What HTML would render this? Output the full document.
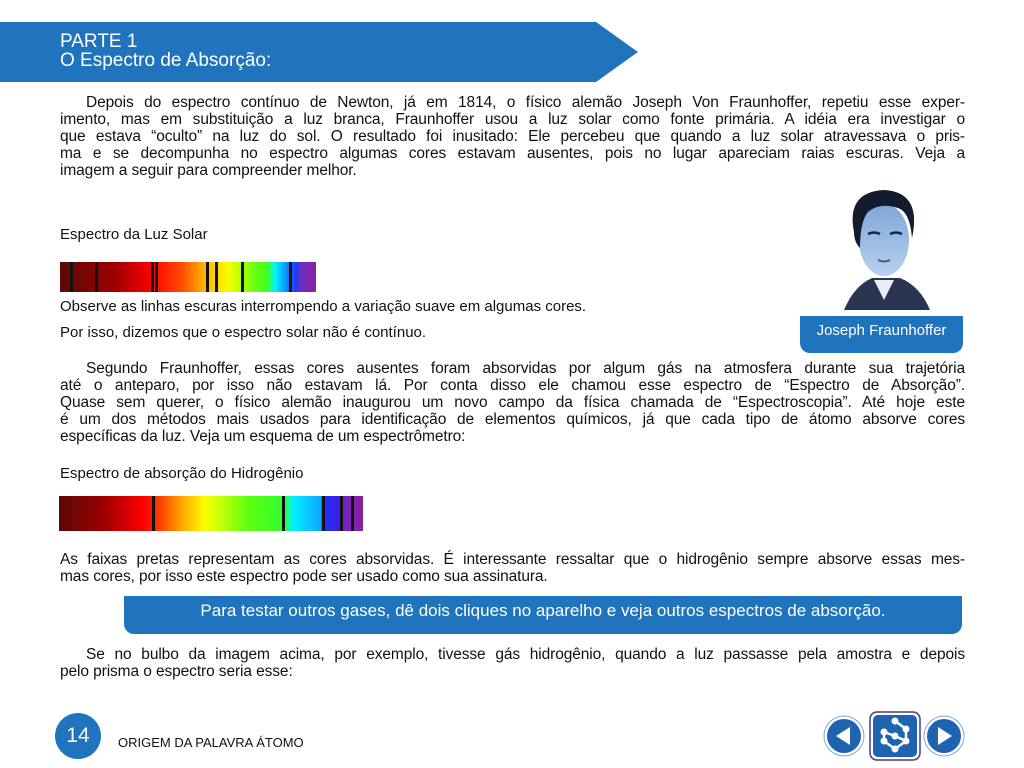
<!DOCTYPE html>
<html><head><meta charset="utf-8"><style>
body{margin:0;width:1024px;height:768px;background:#fff;font-family:"Liberation Sans","DejaVu Sans",sans-serif;color:#111;position:relative;overflow:hidden}
.a{position:absolute}
.l{position:absolute;left:60px;width:905px;font-size:15.5px;line-height:17px;text-align:justify;text-align-last:justify;white-space:nowrap;letter-spacing:-0.1px;box-sizing:border-box}
.i{padding-left:26px}
.n{text-align-last:left}
.t{position:absolute;left:60px;font-size:15px}
.k{position:absolute;top:0;bottom:0;width:3px;background:#111}
</style></head><body>
<svg class="a" style="left:0;top:22px" width="640" height="60"><polygon points="0,0 596,0 638,30 596,60 0,60" fill="#1f74bd"/></svg>
<div class="a" style="left:60px;top:32px;color:#fff;font-size:19px;line-height:19px">PARTE 1<br>O Espectro de Absorção:</div>

<div class="l i" style="top:94px">Depois do espectro contínuo de Newton, já em 1814, o físico alemão Joseph Von Fraunhoffer, repetiu esse exper-</div>
<div class="l" style="top:111px">imento, mas em substituição a luz branca, Fraunhoffer usou a luz solar como fonte primária. A idéia era investigar o</div>
<div class="l" style="top:128px">que estava “oculto” na luz do sol. O resultado foi inusitado: Ele percebeu que quando a luz solar atravessava o pris-</div>
<div class="l" style="top:145px">ma e se decompunha no espectro algumas cores estavam ausentes, pois no lugar apareciam raias escuras. Veja a</div>
<div class="l n" style="top:162px">imagem a seguir para compreender melhor.</div>

<div class="t" style="top:226px">Espectro da Luz Solar</div>
<div class="a" style="left:60px;top:262px;width:256px;height:30px;background:linear-gradient(90deg,#5a0a05 0%,#a00000 22%,#ff0000 36%,#ff5000 48%,#ffb000 56%,#f5ff00 66%,#6cff10 76%,#40ff20 81%,#00f5ff 84%,#1a3cff 92%,#6a30c0 94%,#8a20a0 100%)">
<div class="k" style="left:10px"></div><div class="k" style="left:35px"></div><div class="k" style="left:91px"></div><div class="k" style="left:95px"></div><div class="k" style="left:146px"></div><div class="k" style="left:155px"></div><div class="k" style="left:181px"></div><div class="k" style="left:229px"></div></div>
<div class="t" style="top:298px">Observe as linhas escuras interrompendo a variação suave em algumas cores.</div>
<div class="t" style="top:324px">Por isso, dizemos que o espectro solar não é contínuo.</div>

<svg class="a" style="left:830px;top:188px" width="110" height="122" viewBox="0 0 110 122">
<defs><linearGradient id="f" x1="0" y1="0" x2="0" y2="1"><stop offset="0" stop-color="#7fa6d8"/><stop offset="1" stop-color="#b8d0ee"/></linearGradient></defs>
<path d="M14,122 Q24,98 42,90 L70,90 Q90,98 100,122Z" fill="#2a3550"/>
<path d="M44,92 L54,112 L64,92Z" fill="#e8eef8"/>
<ellipse cx="54" cy="52" rx="25" ry="36" fill="url(#f)"/>
<path d="M24,44 Q16,4 54,2 Q92,4 82,50 Q80,24 68,20 Q50,14 38,24 Q30,34 30,60 Q24,54 24,44Z" fill="#121c2c"/>
<path d="M38,46 q6,-3 12,0 M60,46 q6,-3 12,0" stroke="#1a2740" stroke-width="2.5" fill="none"/>
<path d="M48,72 q6,3 12,0" stroke="#4a5a7a" stroke-width="2" fill="none"/>
</svg>
<div class="a" style="left:800px;top:316px;width:163px;height:37px;background:#1f74bd;border-radius:0 0 10px 10px;color:#fff;font-size:15px;line-height:29px;text-align:center">Joseph Fraunhoffer</div>

<div class="l i" style="top:360px">Segundo Fraunhoffer, essas cores ausentes foram absorvidas por algum gás na atmosfera durante sua trajetória</div>
<div class="l" style="top:377px">até o anteparo, por isso não estavam lá. Por conta disso ele chamou esse espectro de “Espectro de Absorção”.</div>
<div class="l" style="top:394px">Quase sem querer, o físico alemão inaugurou um novo campo da física chamada de “Espectroscopia”. Até hoje este</div>
<div class="l" style="top:411px">é um dos métodos mais usados para identificação de elementos químicos, já que cada tipo de átomo absorve cores</div>
<div class="l n" style="top:428px">específicas da luz. Veja um esquema de um espectrômetro:</div>
<div class="t" style="top:465px">Espectro de absorção do Hidrogênio</div>
<div class="a" style="left:59px;top:496px;width:304px;height:35px;background:linear-gradient(90deg,#5a0a05 0%,#a00000 15%,#ff0000 28%,#ff2000 31%,#ffa000 40%,#ffff00 48%,#60ff10 62%,#30ff30 74%,#00f0ff 77%,#10a8ff 86%,#2030ff 87%,#3a20e0 92%,#7a20c0 94%,#8a20a0 100%)">
<div class="k" style="left:93px"></div><div class="k" style="left:223px"></div><div class="k" style="left:263px"></div><div class="k" style="left:281px"></div><div class="k" style="left:292px"></div></div>

<div class="l" style="top:551px">As faixas pretas representam as cores absorvidas. É interessante ressaltar que o hidrogênio sempre absorve essas mes-</div>
<div class="l n" style="top:568px">mas cores, por isso este espectro pode ser usado como sua assinatura.</div>
<div class="a" style="left:124px;top:596px;width:838px;height:38px;background:#1f74bd;border-radius:0 0 10px 10px;color:#fff;font-size:17px;line-height:30px;text-align:center">Para testar outros gases, dê dois cliques no aparelho e veja outros espectros de absorção.</div>
<div class="l i" style="top:646px">Se no bulbo da imagem acima, por exemplo, tivesse gás hidrogênio, quando a luz passasse pela amostra e depois</div>
<div class="l n" style="top:663px">pelo prisma o espectro seria esse:</div>

<div class="a" style="left:55px;top:713px;width:46px;height:46px;border-radius:50%;background:#1f74bd;color:#fff;font-size:21px;line-height:46px;text-align:center">14</div>
<div class="a" style="left:90px;top:748px;width:0;height:0;border-left:6px solid #1f74bd;border-bottom:8px solid transparent"></div>
<div class="a" style="left:118px;top:735px;font-size:13px">ORIGEM DA PALAVRA ÁTOMO</div>

<svg class="a" style="left:820px;top:708px" width="150" height="56">
<circle cx="24" cy="28" r="20" fill="#fff" stroke="#7fa8d8"/><circle cx="24" cy="28" r="17" fill="#1f64b0"/><polygon points="16,28 30,19 30,37" fill="#fff"/>
<rect x="50" y="4" width="50" height="48" rx="7" fill="#fff" stroke="#4a3a8a" stroke-width="1.5"/><rect x="53" y="7" width="44" height="42" rx="5" fill="#1f64b0"/>
<g stroke="#fff" stroke-width="2.5" fill="none"><path d="M75,13 L86,21 L86,33 L75,41 L64,33 M64,33 L64,24 L75,28 L86,33"/></g>
<g fill="#fff"><circle cx="75" cy="13" r="3.5"/><circle cx="86" cy="21" r="3.5"/><circle cx="86" cy="33" r="3.5"/><circle cx="75" cy="41" r="3.5"/><circle cx="64" cy="33" r="3.5"/><circle cx="64" cy="24" r="3.5"/><circle cx="75" cy="28" r="3.5"/></g>
<circle cx="124" cy="28" r="20" fill="#fff" stroke="#7fa8d8"/><circle cx="124" cy="28" r="17" fill="#1f64b0"/><polygon points="132,28 118,19 118,37" fill="#fff"/>
</svg>
</body></html>
